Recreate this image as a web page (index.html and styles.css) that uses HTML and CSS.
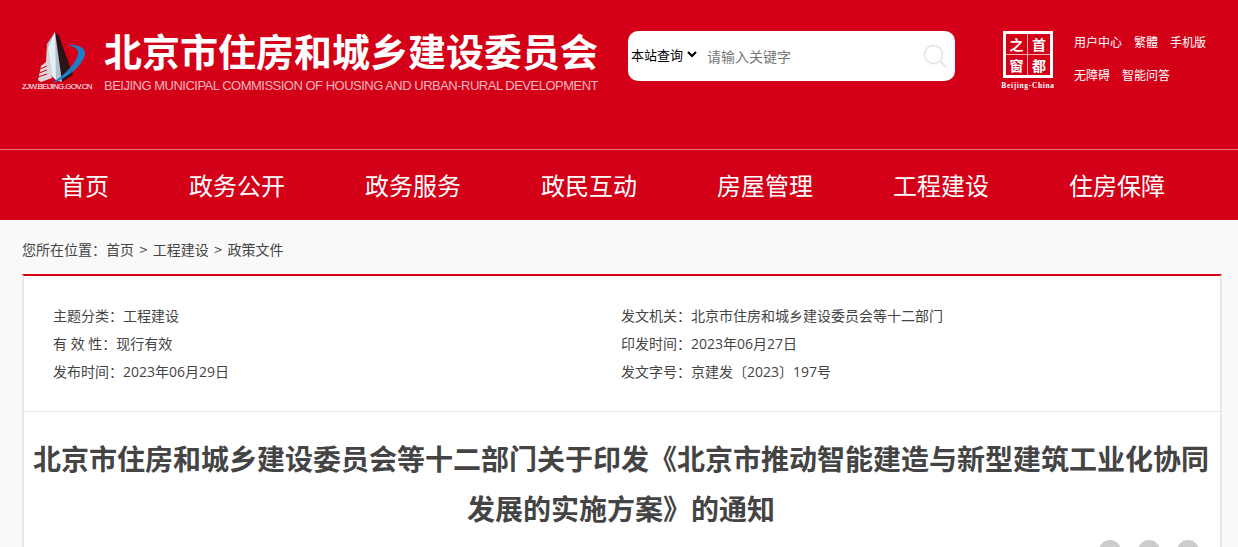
FILE: index.html
```html
<!DOCTYPE html>
<html lang="zh-CN">
<head>
    <meta charset="UTF-8">
    <title>北京市住房和城乡建设委员会</title>
    <link rel="stylesheet" href="styles.css">
</head>
<body>
    <header class="top">
        <div class="logo">
            <svg class="logo-mark" width="72" height="53" viewBox="0 0 72 53">
                <polygon points="33,2 37,6 51,45 40,52" fill="#2a1416"/>
                <polygon points="33,2 40,52 34,50 28,44 25,14" fill="#a8c6d2"/>
                <polygon points="33,2 34,50 30,46 26,18" fill="#e4f0f4"/>
                <polygon points="25,14 30,48 19,52 16,50 19,36 24,32" fill="#dcd6da"/>
                <path d="M18 39l7-3M17 43l8-3M16 47l9-3" stroke="#d40018" stroke-width="1"/>
                <path d="M30 53 C47 48 64 32 63 22 C62 17 54 14 45 15 C52 16 57 19 56 24 C54 33 44 44 30 53 Z" fill="#1c7fc6"/>
            </svg>
            <div class="logo-url">ZJW.BEIJING.GOV.CN</div>
        </div>
        <div class="brand">
            <div class="brand-cn">北京市住房和城乡建设委员会</div>
            <div class="brand-en">BEIJING MUNICIPAL COMMISSION OF HOUSING AND URBAN-RURAL DEVELOPMENT</div>
        </div>
        <form class="search">
            <select class="search-scope">
                <option>本站查询</option>
            </select>
            <input class="search-input" type="text" placeholder="请输入关键字">
            <svg class="search-icon" width="24" height="24" viewBox="0 0 24 24">
                <circle cx="10.5" cy="10.5" r="9" fill="none" stroke="#e8e8e8" stroke-width="2"/>
                <path d="M17 17l6 6" stroke="#e8e8e8" stroke-width="2.4" fill="none"/>
            </svg>
        </form>
        <div class="capital">
            <div class="capital-grid">
                <span>之</span><span>首</span><span>窗</span><span>都</span>
            </div>
            <div class="capital-en">Beijing-China</div>
        </div>
        <div class="toplinks">
            <div class="toplinks-row"><a>用户中心</a><a>繁體</a><a>手机版</a></div>
            <div class="toplinks-row"><a>无障碍</a><a>智能问答</a></div>
        </div>
    </header>

    <nav class="nav">
        <a>首页</a>
        <a>政务公开</a>
        <a>政务服务</a>
        <a>政民互动</a>
        <a>房屋管理</a>
        <a>工程建设</a>
        <a>住房保障</a>
    </nav>

    <div class="crumbs">您所在位置：<a>首页</a><span class="sep">&gt;</span><a>工程建设</a><span class="sep">&gt;</span><a>政策文件</a></div>

    <main class="card">
        <section class="meta">
            <div class="meta-col">
                <p>主题分类：工程建设</p>
                <p>有 效 性：现行有效</p>
                <p>发布时间：2023年06月29日</p>
            </div>
            <div class="meta-col">
                <p>发文机关：北京市住房和城乡建设委员会等十二部门</p>
                <p>印发时间：2023年06月27日</p>
                <p>发文字号：京建发〔2023〕197号</p>
            </div>
        </section>
        <h1 class="title">北京市住房和城乡建设委员会等十二部门关于印发《北京市推动智能建造与新型建筑工业化协同发展的实施方案》的通知</h1>
        <div class="share">
            <span class="dot"></span>
            <span class="dot"></span>
            <span class="dot"></span>
        </div>
    </main>
</body>
</html>
```

FILE: styles.css
```css
html, body {
    height: 547px;
    overflow: hidden;
}

body {
    margin: 0;
    padding: 0;
    background-color: #f9f9f9;
    color: #333;
    font-family: "Noto Sans CJK SC", "Liberation Sans", sans-serif;
}

.top {
    display: flex;
    align-items: flex-start;
    height: 149px;
    background-color: #d40018;
    color: white;
}

.logo {
    width: 82px;
    padding: 30px 0 0 22px;
    flex: none;
}

.logo-mark {
    display: block;
}

.logo-url {
    font-family: "Liberation Sans", sans-serif;
    font-size: 8px;
    line-height: 8px;
    letter-spacing: -0.7px;
    white-space: nowrap;
}

.brand {
    width: 494px;
    flex: none;
    padding-top: 27px;
}

.brand-cn {
    font-size: 38px;
    font-weight: 700;
    line-height: 46px;
    white-space: nowrap;
}

.brand-en {
    margin-top: 4px;
    font-family: "Liberation Sans", sans-serif;
    font-size: 13px;
    line-height: 18px;
    letter-spacing: -0.5px;
    color: #f5b5bb;
    white-space: nowrap;
}

.search {
    display: flex;
    align-items: center;
    width: 327px;
    height: 50px;
    flex: none;
    margin: 31px 0 0 30px;
    background: white;
    border-radius: 10px;
}

.search-scope {
    width: 73px;
    margin: 0 0 3px -1px;
    padding: 0;
    border: none;
    background: transparent;
    color: black;
    font-family: inherit;
    font-size: 13px;
    flex: none;
}

.search-input {
    width: 200px;
    margin-left: 7px;
    padding: 0;
    border: none;
    outline: none;
    font-family: inherit;
    font-size: 14px;
    flex: none;
}

.search-input::placeholder {
    color: #777;
}

.search-icon {
    margin-left: 16px;
    flex: none;
}

.capital {
    width: 70px;
    flex: none;
    margin: 31px 0 0 48px;
}

.capital-grid {
    display: grid;
    grid-template-columns: 1fr 1fr;
    grid-template-rows: 1fr 1fr;
    width: 50px;
    height: 47px;
    box-sizing: border-box;
    border: 3px solid white;
    font-size: 14px;
    font-weight: 700;
    line-height: 20px;
    text-align: center;
}

.capital-grid span {
    border-bottom: 1px solid #f3b3b9;
    border-right: 1px solid #f3b3b9;
}

.capital-grid span:nth-child(2n) {
    border-right: none;
}

.capital-grid span:nth-child(n+3) {
    border-bottom: none;
}

.capital-en {
    width: 60px;
    margin: 3px 0 0 -5px;
    font-family: "Liberation Serif", serif;
    font-size: 7.5px;
    font-weight: 700;
    line-height: 9px;
    letter-spacing: 0.65px;
    text-align: center;
}

.toplinks {
    padding-top: 25px;
    margin-left: 1px;
    font-size: 12px;
}

.toplinks-row {
    display: flex;
    gap: 12px;
    height: 33px;
    line-height: 33px;
    white-space: nowrap;
}

.nav {
    display: flex;
    height: 70px;
    padding-left: 21px;
    border-top: 1px solid #e5737f;
    background-color: #d40018;
}

.nav a {
    padding: 0 40px;
    color: white;
    font-size: 24px;
    line-height: 69px;
    white-space: nowrap;
}

.crumbs {
    height: 54px;
    padding-left: 22px;
    font-size: 14px;
    line-height: 58px;
    color: #444;
}

.sep {
    margin: 0 5.5px;
}

.card {
    margin: 0 16px 0 22px;
    background: white;
    border-top: 2px solid #d40018;
    border-left: 2px solid #e8e8e4;
    border-right: 2px solid #e8e8e4;
}

.meta {
    display: flex;
    height: 135px;
    padding-left: 29px;
    border-bottom: 1px solid #e8e8e4;
}

.meta-col {
    width: 568px;
    padding-top: 26px;
    font-family: "Open Sans", "Noto Sans CJK SC", sans-serif;
    font-size: 14px;
    line-height: 28px;
    color: #444;
}

.meta-col p {
    margin: 0;
}

.title {
    margin: 0;
    padding: 21px 10px 0 8px;
    font-size: 28px;
    font-weight: 700;
    line-height: 50px;
    text-align: center;
    color: #444;
}

.share {
    display: flex;
    justify-content: flex-end;
    gap: 17px;
    padding: 7px 21px 0 0;
}

.dot {
    width: 22px;
    height: 22px;
    border-radius: 50%;
    background: #ccc;
}
```
